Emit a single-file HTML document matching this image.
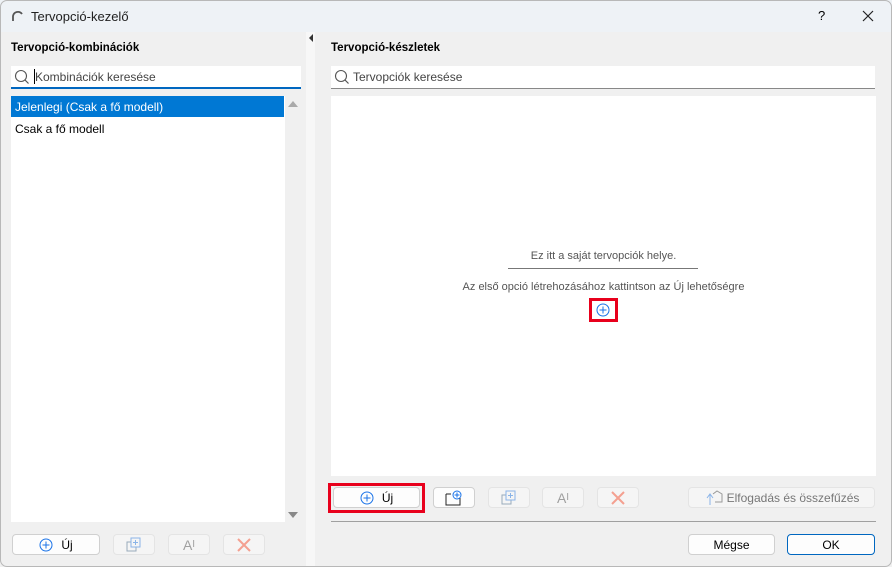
<!DOCTYPE html>
<html><head><style>
*{box-sizing:border-box;margin:0;padding:0}
body{width:892px;height:567px;background:#f0f0f0;font-family:"Liberation Sans",sans-serif;font-size:12px;color:#000;position:relative;overflow:hidden}
.a{position:absolute}
.btn{position:absolute;background:#fdfdfd;border:1px solid #d0d0d0;border-radius:4px;display:flex;align-items:center;justify-content:center;font-size:12px}
.dis{background:#f5f5f5;border-color:#e4e4e4;color:#a0a0a0}
</style></head><body>
<div class="a" style="left:0;top:0;width:892px;height:32px;background:#eef2f6"></div>
<div class="a" style="left:0;top:0;width:892px;height:567px;border:1px solid #b8b8b8;border-radius:7px;pointer-events:none"></div>
<svg class="a" style="left:10px;top:9px" width="14" height="14"><path d="M3 12 V7 A5 5 0 0 1 12 5" stroke="#555" stroke-width="1.8" fill="none"/></svg>
<div class="a" style="left:31px;top:9px;font-size:13px;color:#222">Tervopció-kezelő</div>
<div class="a" style="left:818px;top:8px;font-size:13px">?</div>
<svg class="a" style="left:862px;top:10px" width="12" height="12"><path d="M1 1L11 11M11 1L1 11" stroke="#222" stroke-width="1.2"/></svg>
<div class="a" style="left:306px;top:32px;width:9px;height:534px;background:#f7f7f7"></div>
<svg class="a" style="left:309px;top:34px" width="5" height="8"><path d="M4 0L0 4L4 8Z" fill="#333"/></svg>

<div class="a" style="left:11px;top:42px;font-weight:bold;font-size:11.5px">Tervopció-kombinációk</div>
<div class="a" style="left:11px;top:66px;width:290px;height:23px;background:#fff;border-bottom:2px solid #0067c0"></div>
<svg class="a" style="left:14px;top:69px" width="16" height="16"><circle cx="7" cy="7" r="5.5" stroke="#555" fill="none" stroke-width="1.1"/><path d="M11 11L14.5 14.5" stroke="#555" stroke-width="1.2"/></svg>
<div class="a" style="left:34px;top:69px;width:1px;height:15px;background:#000"></div>
<div class="a" style="left:35px;top:70px;color:#444">Kombinációk keresése</div>
<div class="a" style="left:11px;top:96px;width:274px;height:426px;background:#fff"></div>
<div class="a" style="left:11px;top:96px;width:273px;height:21px;background:#0078d4;color:#fff;padding:4px 0 0 4px">Jelenlegi (Csak a fő modell)</div>
<div class="a" style="left:15px;top:122px">Csak a fő modell</div>
<svg class="a" style="left:288px;top:100px" width="10" height="8"><path d="M0 7L5 1L10 7Z" fill="#aaa"/></svg>
<svg class="a" style="left:288px;top:511px" width="10" height="8"><path d="M0 1L5 7L10 1Z" fill="#888"/></svg>

<div class="btn" style="left:12px;top:534px;width:88px;height:21px"><svg width="14" height="14" style="margin-right:8px"><circle cx="7" cy="7" r="6" stroke="#1a73e8" fill="none"/><path d="M7 3.5V10.5M3.5 7H10.5" stroke="#1a73e8"/></svg>Új</div>
<div class="btn dis" style="left:113px;top:534px;width:42px;height:21px"><svg width="16" height="16"><rect x="1" y="5" width="9" height="9" fill="none" stroke="#9ab"/><rect x="5" y="1" width="9" height="9" fill="#f5f5f5" stroke="#8ab4e8"/><path d="M9.5 3v5M7 5.5h5" stroke="#8ab4e8"/></svg></div>
<div class="btn dis" style="left:168px;top:534px;width:42px;height:21px;font-size:14px">A<span style="font-size:10px;vertical-align:top">I</span></div>
<div class="btn dis" style="left:223px;top:534px;width:42px;height:21px"><svg width="14" height="14"><path d="M1 1L13 13M13 1L1 13" stroke="#f4a090" stroke-width="2"/></svg></div>

<div class="a" style="left:331px;top:42px;font-weight:bold;font-size:11.5px">Tervopció-készletek</div>
<div class="a" style="left:331px;top:66px;width:544px;height:23px;background:#fff;border-bottom:1px solid #888"></div>
<svg class="a" style="left:334px;top:69px" width="16" height="16"><circle cx="7" cy="7" r="5.5" stroke="#555" fill="none" stroke-width="1.1"/><path d="M11 11L14.5 14.5" stroke="#555" stroke-width="1.2"/></svg>
<div class="a" style="left:353px;top:70px;color:#444">Tervopciók keresése</div>
<div class="a" style="left:331px;top:96px;width:545px;height:380px;background:#fff"></div>
<div class="a" style="left:331px;top:250px;width:545px;text-align:center;color:#555;font-size:11px">Ez itt a saját tervopciók helye.</div>
<div class="a" style="left:508px;top:268px;width:190px;height:1px;background:#777"></div>
<div class="a" style="left:331px;top:281px;width:545px;text-align:center;color:#555;font-size:11px">Az első opció létrehozásához kattintson az Új lehetőségre</div>
<div class="a" style="left:589px;top:298px;width:29px;height:24px;border:3px solid #e8001c"></div>
<svg class="a" style="left:596px;top:303px" width="14" height="14"><circle cx="7" cy="7" r="6" stroke="#1a73e8" fill="none"/><path d="M7 3.5V10.5M3.5 7H10.5" stroke="#1a73e8"/></svg>

<div class="a" style="left:328px;top:483px;width:97px;height:30px;border:3px solid #e8001c"></div>
<div class="btn" style="left:333px;top:487px;width:87px;height:21px"><svg width="14" height="14" style="margin-right:8px"><circle cx="7" cy="7" r="6" stroke="#1a73e8" fill="none"/><path d="M7 3.5V10.5M3.5 7H10.5" stroke="#1a73e8"/></svg>Új</div>
<div class="btn" style="left:433px;top:487px;width:42px;height:21px"><svg width="18" height="16"><path d="M1 4V15H15V8" fill="none" stroke="#222"/><path d="M1 4H6" stroke="#222"/><circle cx="12" cy="5" r="4" stroke="#1a73e8" fill="#fff"/><path d="M12 2.5v5M9.5 5h5" stroke="#1a73e8"/></svg></div>
<div class="btn dis" style="left:488px;top:487px;width:42px;height:21px"><svg width="16" height="16"><rect x="1" y="5" width="9" height="9" fill="none" stroke="#9ab"/><rect x="5" y="1" width="9" height="9" fill="#f5f5f5" stroke="#8ab4e8"/><path d="M9.5 3v5M7 5.5h5" stroke="#8ab4e8"/></svg></div>
<div class="btn dis" style="left:542px;top:487px;width:42px;height:21px;font-size:14px">A<span style="font-size:10px;vertical-align:top">I</span></div>
<div class="btn dis" style="left:597px;top:487px;width:42px;height:21px"><svg width="14" height="14"><path d="M1 1L13 13M13 1L1 13" stroke="#f4a090" stroke-width="2"/></svg></div>
<div class="btn dis" style="left:688px;top:487px;width:187px;height:21px;color:#777"><svg width="20" height="16" style="margin-right:3px"><path d="M6 15V5M3 8L6 4L9 8" stroke="#8ab4e8" fill="none"/><path d="M9 4L13 1L18 4V12H11" stroke="#999" fill="none"/></svg>Elfogadás és összefűzés</div>
<div class="a" style="left:331px;top:521px;width:545px;height:1px;background:#a0a0a0"></div>
<div class="btn" style="left:688px;top:534px;width:87px;height:21px">Mégse</div>
<div class="btn" style="left:787px;top:534px;width:88px;height:21px;border-color:#0067c0">OK</div>
</body></html>
